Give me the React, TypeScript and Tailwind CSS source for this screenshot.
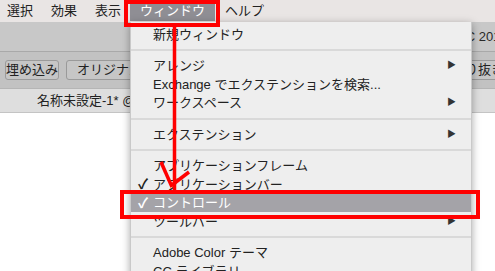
import type { ReactNode } from "react";

type Item =
  | { kind: "item"; label: string; check?: boolean; sub?: boolean; active?: boolean }
  | { kind: "sep" };

const items: Item[] = [
  { kind: "item", label: "新規ウィンドウ" },
  { kind: "sep" },
  { kind: "item", label: "アレンジ", sub: true },
  { kind: "item", label: "Exchange でエクステンションを検索..." },
  { kind: "item", label: "ワークスペース", sub: true },
  { kind: "sep" },
  { kind: "item", label: "エクステンション", sub: true },
  { kind: "sep" },
  { kind: "item", label: "アプリケーションフレーム" },
  { kind: "item", label: "アプリケーションバー", check: true },
  { kind: "item", label: "コントロール", check: true, active: true },
  { kind: "item", label: "ツールバー", sub: true },
  { kind: "sep" },
  { kind: "item", label: "Adobe Color テーマ" },
  { kind: "item", label: "CC ライブラリ" },
];

function MenuRow({ item }: { item: Item }) {
  if (item.kind === "sep") {
    return (
      <div className="flex h-[13px] items-center">
        <div className="h-[2px] w-full bg-[#d9d9d9]" />
      </div>
    );
  }
  return (
    <div
      className={`flex h-[18.5px] items-center text-[13px] leading-none ${
        item.active ? "bg-[#a4a3a8] text-white" : "text-[#222222]"
      }`}
    >
      <span className="w-[22px] pl-[7px] text-[14px] font-bold">{item.check ? "✓" : ""}</span>
      <span className="flex-1 whitespace-nowrap">{item.label}</span>
      {item.sub ? <span className="pr-[15px] text-[9px] text-[#333333]">▶</span> : null}
    </div>
  );
}

function Btn({ children, className }: { children: ReactNode; className?: string }) {
  return (
    <div
      className={`flex h-[20px] items-center justify-center whitespace-nowrap rounded-[3px] border border-[#9a9a9a] bg-[#c6c6c6] text-[13px] text-[#222222] ${className ?? ""}`}
    >
      {children}
    </div>
  );
}

export default function App() {
  return (
    <div className="relative h-[271px] w-[495px] overflow-hidden bg-white font-['Liberation_Sans','Noto_Sans_CJK_JP',sans-serif]">
      {/* menu bar */}
      <div className="flex h-[22px] items-center bg-[#e9e5e4] pl-[7px] text-[13px] text-[#222222]">
        <span className="mr-[18px]">選択</span>
        <span className="mr-[18px]">効果</span>
        <span className="mr-[9px]">表示</span>
        <span className="flex h-[19px] items-center bg-[#8f8e94] px-[10px] text-white">ウィンドウ</span>
        <span className="ml-[10px]">ヘルプ</span>
      </div>

      {/* title bar */}
      <div className="flex h-[29px] items-center overflow-hidden whitespace-nowrap bg-[#c8c8c8] pl-[358px] text-[13px] text-[#2a2a2a]">
        Adobe Illustrator CC 2017
      </div>
      <div className="h-px bg-[#a9a9a9]" />

      {/* control bar */}
      <div className="flex h-[36px] items-center gap-[7px] overflow-hidden bg-[#c2c2c2] pl-[5px]">
        <Btn className="w-[81px]">埋め込み</Btn>
        <Btn className="w-[90px] justify-start pl-[10px]">オリジナルを編集</Btn>
        <Btn className="ml-[245px] shrink-0 justify-start pl-[4px]">画像の切り抜き</Btn>
      </div>

      {/* tab bar */}
      <div className="flex h-[24px] items-center border-t border-[#b5b5b5] bg-[#dedede] pl-[37px] text-[13px] text-[#222222] whitespace-nowrap">
        名称未設定-1* @ 100% (RGB/プレビュー)
      </div>
      <div className="h-px bg-[#c4c4c4]" />

      {/* window menu */}
      <div className="absolute left-[130px] top-[22px] h-[260px] w-[342px] border-x border-[#c9c9c9] bg-[#eeeeee] pt-[3px] shadow-[0_2px_8px_rgba(0,0,0,0.35)]">
        {items.map((item, i) => (
          <MenuRow key={i} item={item} />
        ))}
      </div>

      {/* annotations */}
      <div className="absolute left-[124px] top-0 h-[27px] w-[96px] border-4 border-[#ff0000]" />
      <div className="absolute left-[120px] top-[190px] h-[29px] w-[360px] border-4 border-[#ff0000]" />
      <svg className="absolute left-0 top-0" width="495" height="271" viewBox="0 0 495 271">
        <g stroke="#ff0000" strokeWidth="3.5" fill="none" strokeLinecap="butt">
          <line x1="174.5" y1="26" x2="174.5" y2="190" />
          <line x1="161" y1="162" x2="172" y2="187" />
          <line x1="189" y1="172" x2="172" y2="185" />
        </g>
      </svg>
    </div>
  );
}
